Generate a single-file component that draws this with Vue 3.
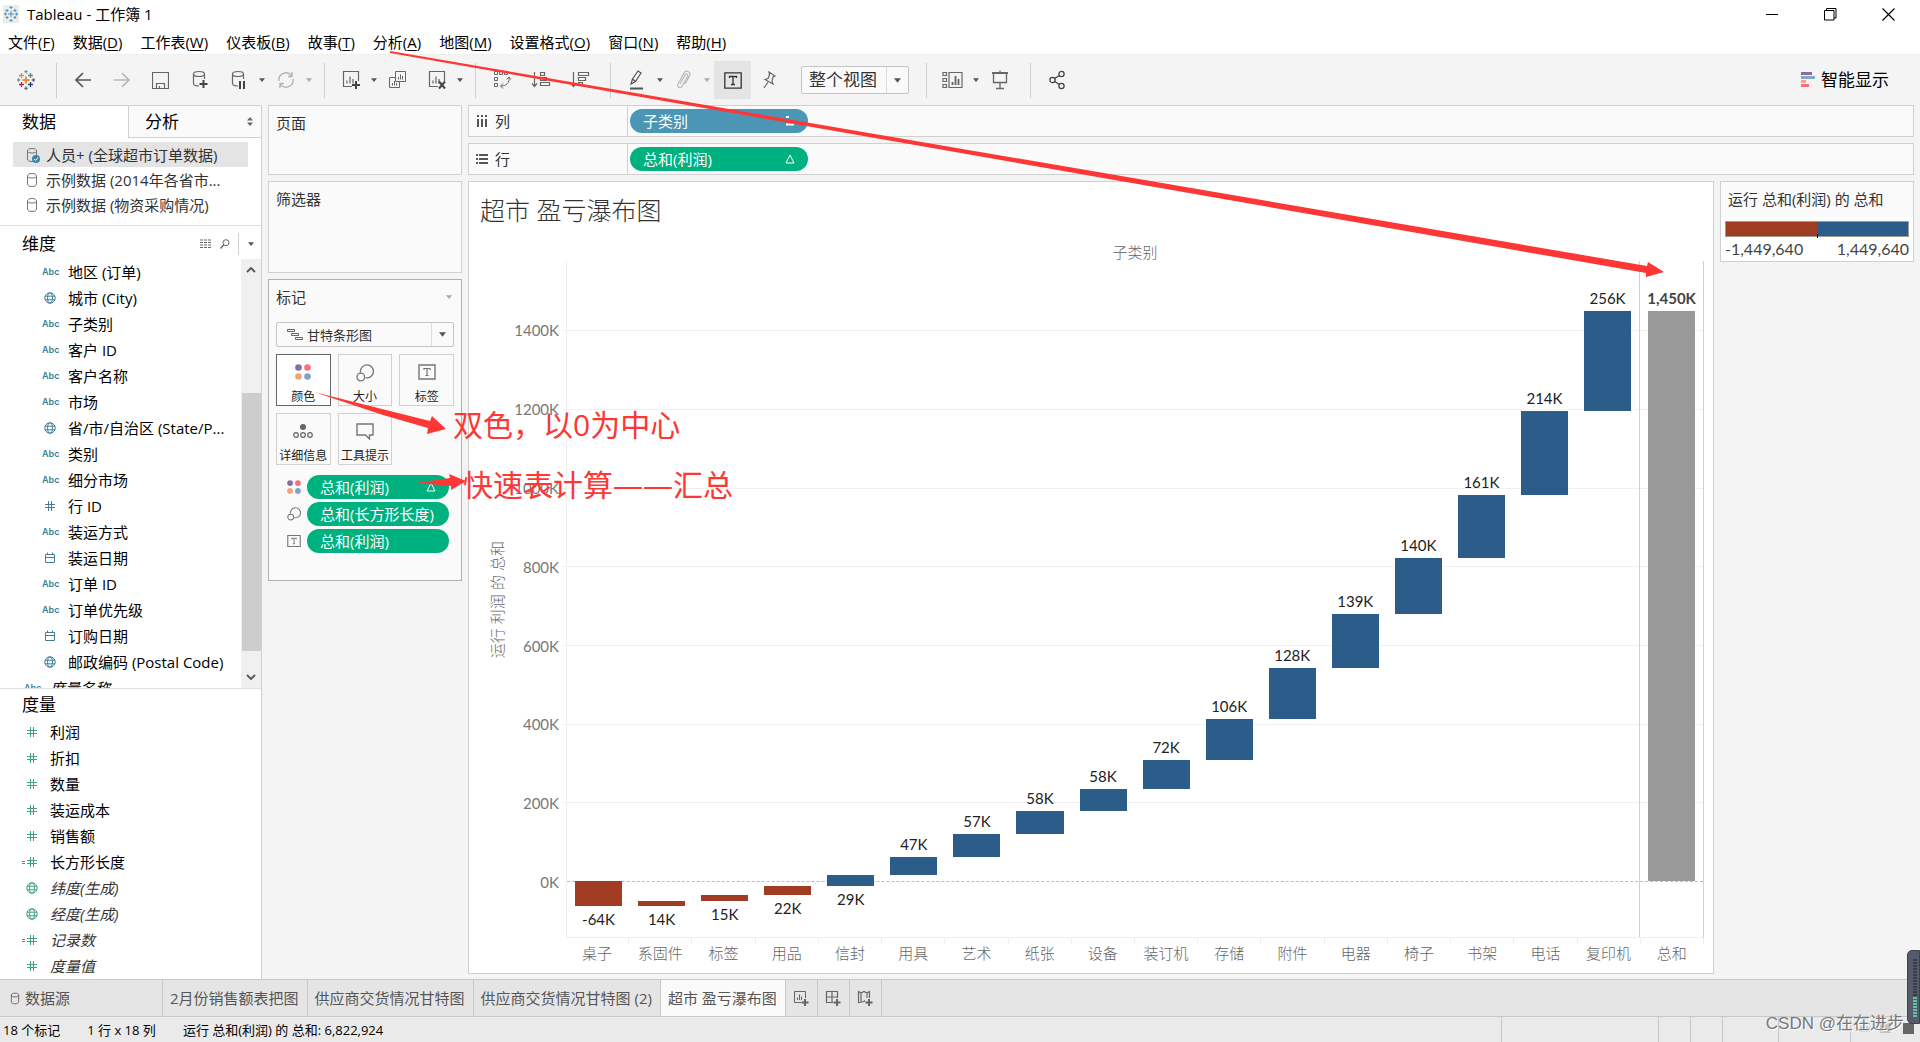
<template>
  <div class="app">
    <svg class="defs" aria-hidden="true">
      <symbol id="caret" viewBox="0 0 8 5"><path d="M0 0h8L4 5z" fill="currentColor" /></symbol>
      <symbol id="globe" viewBox="0 0 12 12">
        <g fill="none" stroke="currentColor"><circle cx="6" cy="6" r="5.2" /><ellipse cx="6" cy="6" rx="2.4" ry="5.2" /><path d="M1 4.2h10M1 7.8h10" /></g>
      </symbol>
      <symbol id="hash" viewBox="0 0 12 12"><path d="M4.5 1v10M7.5 1v10M1 4.5h10M1 7.5h10" fill="none" stroke="currentColor" /></symbol>
      <symbol id="calc" viewBox="0 0 16 12"><path d="M8.5 1v10M11.5 1v10M5 4.5h10M5 7.5h10M0 5.5h3M0 7.5h3" fill="none" stroke="currentColor" /></symbol>
      <symbol id="date" viewBox="0 0 12 12"><path d="M1.5 2.5h9v8h-9zM1.5 5.5h9M3.5 0.5v2M8.5 0.5v2" fill="none" stroke="currentColor" /></symbol>
      <symbol id="db" viewBox="0 0 12 16"><path d="M1.5 4v8c0 1.6 1.5 2.5 4.5 2.5s4.5-.9 4.5-2.5V4c0-1.600-1.500-2.500-4.500-2.500S1.500 2.400 1.500 4zM1.500 4c0 1.400 1.500 2 4.500 2s4.500-.600 4.500-2" fill="none" stroke="currentColor" /></symbol>
      <symbol id="dots" viewBox="0 0 16 16">
        <circle cx="3.500" cy="3.500" r="3.300" fill="#8a6d9c" /><circle cx="12.500" cy="3.500" r="3.300" fill="#fa6e7d" />
        <circle cx="3.500" cy="12.500" r="3.300" fill="#f2a479" /><circle cx="12.500" cy="12.500" r="3.300" fill="#7ea3cb" />
      </symbol>
      <symbol id="size" viewBox="0 0 18 18">
        <g fill="none" stroke="#757575" stroke-width="1.300"><path d="M4.500 8.500a6.500 6.500 0 1 1 5 5.300" /><circle cx="4.800" cy="13" r="3.800" /></g>
      </symbol>
      <symbol id="label" viewBox="0 0 18 16">
        <g fill="none" stroke="#757575"><path d="M1 1h16v14H1z" stroke-width="1.400" /><path d="M6 6V4.500h6V6M9 4.500v7M7.500 11.500h3" stroke-width="1.200" /></g>
      </symbol>
      <symbol id="sheet" viewBox="0 0 20 20">
        <path d="M11 16.500H2.500v-15h15V11M6 13.500v-3M9 13.500v-7M12 13.500V9" fill="none" stroke="currentColor" stroke-width="1.200" />
      </symbol>
    </svg>

    <header class="titlebar">
      <svg width="16" height="18" viewBox="0 0 16 18">
        <path d="M0 0h16v18H0z" fill="#ececec" />
        <path d="M8 6v6M5 9h6M8 1v3M6.500 2.500h3M8 14v3M6.500 15.500h3M1 9h3M2.500 7.500v3M12 9h3M13.500 7.500v3M4 4v3M2.500 5.500h3M12 4v3M10.500 5.500h3M4 11v3M2.500 12.500h3M12 11v3M10.500 12.500h3" stroke="#4f93b8" fill="none" />
      </svg>
      <span class="title">Tableau - 工作簿 1</span>
      <button class="win" aria-label="最小化"><svg width="13" height="13"><path d="M0 6.500h12" stroke="#000" /></svg></button>
      <button class="win" aria-label="还原"><svg width="13" height="13"><path d="M.5 2.500h9.500v9.500H.5zM2.500 2.500v-2h9.500v9.500h-2" fill="none" stroke="#000" /></svg></button>
      <button class="win" aria-label="关闭"><svg width="13" height="13"><path d="M.5.500l12 12M12.500.500l-12 12" stroke="#000" stroke-width="1.200" /></svg></button>
    </header>

    <nav class="menu">
      <a v-for="m in menus" :key="m[0]" href="#">{{ m[0] }}(<u>{{ m[1] }}</u>)</a>
    </nav>

    <div class="toolbar">
      <button class="tool" aria-label="开始页面">
        <svg width="18" height="20" viewBox="0 0 18 20" fill="none" stroke-width="1.300">
          <path d="M9 6.500v7M5.500 10h7" stroke="#eb8a2d" stroke-width="1.800" />
          <path d="M4.500 3v5M2 5.500h5" stroke="#eb8a2d" /><path d="M13.500 3v5M11 5.500h5" stroke="#59879b" />
          <path d="M4.500 12v5M2 14.500h5" stroke="#c72035" /><path d="M13.500 12v5M11 14.500h5" stroke="#1f457e" />
          <path d="M9 0v3.500M7.300 1.700h3.400M1.500 8.300v3.400M0 10h3.300" stroke="#7099a6" /><path d="M9 16.500V20M7.300 18.300h3.400M16.500 8.300v3.400M14.700 10H18" stroke="#5b6591" />
        </svg>
      </button>
      <i class="sep"></i>
      <button class="tool" aria-label="撤消"><svg width="18" height="16" viewBox="0 0 18 16"><path d="M17 8H2M9 1L2 8l7 7" fill="none" stroke="#555" stroke-width="1.700" /></svg></button>
      <button class="tool" aria-label="重做"><svg width="18" height="16" viewBox="0 0 18 16"><path d="M1 8h15M9 1l7 7-7 7" fill="none" stroke="#b8b8b8" stroke-width="1.700" /></svg></button>
      <button class="tool" aria-label="保存"><svg width="17" height="17"><path d="M.5.500h16v16H.5zM4.500 16.500v-5h8v5M7.500 16v-2" fill="none" stroke="#666" stroke-width="1.200" /></svg></button>
      <button class="tool" aria-label="新建数据源">
        <svg width="18" height="20" viewBox="0 0 18 20" fill="none" stroke="#666"><path d="M8 16c-3.500 0-5.500-.8-5.500-2.500V4M13.500 4v5M2.500 4c0 1.600 2 2.500 5.500 2.500s5.500-.9 5.500-2.500S11.500 1.500 8 1.500 2.500 2.400 2.500 4z" stroke-width="1.200" /><path d="M12.500 10v8M8.500 14h8" stroke="#444" stroke-width="2" /></svg>
      </button>
      <button class="tool" aria-label="暂停自动更新">
        <svg width="18" height="20" viewBox="0 0 18 20" fill="none" stroke="#666"><path d="M8 16c-3.500 0-5.500-.8-5.500-2.500V4M13.500 4v5M2.500 4c0 1.600 2 2.500 5.500 2.500s5.500-.9 5.500-2.500S11.500 1.500 8 1.500 2.500 2.400 2.500 4z" stroke-width="1.200" /><path d="M10 11v8M14 11v8" stroke="#444" stroke-width="2" /></svg>
      </button>
      <svg class="drop"><use href="#caret" /></svg>
      <button class="tool" aria-label="运行更新"><svg width="20" height="18" viewBox="0 0 20 18" fill="none" stroke="#b5b5b5" stroke-width="1.400"><path d="M3 10a7 7 0 0 1 12.500-5.300M17 8a7 7 0 0 1-12.500 5.300M16 1v4.500h-4M4 17v-4.500h4" /></svg></button>
      <svg class="drop off"><use href="#caret" /></svg>
      <i class="sep"></i>
      <button class="tool" aria-label="新建工作表"><svg width="20" height="20"><use href="#sheet" /><path d="M15 11v8M11 15h8" stroke="#444" stroke-width="2" /></svg></button>
      <svg class="drop"><use href="#caret" /></svg>
      <button class="tool" aria-label="复制"><svg width="20" height="20" viewBox="0 0 20 20" fill="none" stroke="#666"><path d="M7.500 1.500h10v10h-10zM7 7.500H1.500v10h10V12M10.500 9.500V7M12.500 9.500v-5M14.500 9.500V6M4.500 15.500V13M6.500 15.500V11M8.500 15.500V13" /></svg></button>
      <button class="tool" aria-label="清除工作表"><svg width="20" height="20"><use href="#sheet" /><path d="M12 11.500l6 7M18 11.500l-6 7" stroke="#444" stroke-width="2" /></svg></button>
      <svg class="drop"><use href="#caret" /></svg>
      <i class="sep"></i>
      <button class="tool" aria-label="交换行和列"><svg width="20" height="20" viewBox="0 0 20 20" fill="none" stroke="#666"><path d="M2.500 1.500h3v3h-3zM7.500 1.500h3v3h-3zM12.500 1.500h3v3h-3zM2.500 7.500h3v3h-3zM2.500 13.500h3v3h-3zM17 7c1 6-3 9-8 9M14.500 9.500L17 7l2 2.500M11 13.500L8.500 16l2.500 2.500" /></svg></button>
      <button class="tool" aria-label="升序排序"><svg width="20" height="20" viewBox="0 0 20 20" fill="none" stroke="#666"><path d="M3.500 2v14M1 13.500l2.500 3 2.500-3M9.500 2.500h4v3h-4zM9.500 7.500h6v3h-6zM9.500 12.500h9v3h-9z" stroke-width="1.200" /></svg></button>
      <button class="tool" aria-label="降序排序"><svg width="20" height="20" viewBox="0 0 20 20" fill="none" stroke="#666"><path d="M3.500 2v14M1 13.500l2.500 3 2.500-3M8.500 2.500h10v3h-10zM8.500 7.500h7v3h-7zM8.500 12.500h4v3h-4z" stroke-width="1.200" /></svg></button>
      <i class="sep"></i>
      <button class="tool" aria-label="突出显示"><svg width="18" height="22" viewBox="0 0 18 22" fill="none" stroke="#555"><path d="M3 15l1.500-5L10 2l3 2-5.500 8.500zM4.500 10l3 2.500" stroke-width="1.200" /><path d="M2 19.500h13" stroke-width="2" /></svg></button>
      <svg class="drop"><use href="#caret" /></svg>
      <button class="tool" aria-label="分组成员"><svg width="16" height="20" viewBox="0 0 16 20" fill="none" stroke="#b8b8b8" stroke-width="1.200"><path d="M4 14l5-9c1-1.800 3.500-.5 2.500 1.500l-5.500 10c-1.500 2.500-5.500.500-4-2.500L8 3c2-3.500 7.500-1 5.500 3L9 14" /></svg></button>
      <svg class="drop off"><use href="#caret" /></svg>
      <button class="tool on" aria-label="显示标记标签"><svg width="18" height="17" viewBox="0 0 18 17" fill="none" stroke="#333"><path d="M.8.800h16.400v15.400H.8z" stroke-width="1.300" /><path d="M5.500 6V4.500h7V6M9 4.500v8M7 12.500h4" stroke-width="1.300" /></svg></button>
      <button class="tool pin" aria-label="固定轴"><svg width="14" height="18" viewBox="0 0 14 18" fill="none" stroke="#666" stroke-width="1.200"><path d="M7 1l6 4-2 1-1 4 1 3-8-4.500 3-1L7.500 4zM6 11l-4 6" /></svg></button>
      <div class="combo fit">
        <select aria-label="适合"><option>整个视图</option></select>
        <span><svg><use href="#caret" /></svg></span>
      </div>
      <i class="sep wide"></i>
      <button class="tool" aria-label="显示/隐藏卡"><svg width="21" height="18" viewBox="0 0 21 18" fill="none" stroke="#666" stroke-width="1.200"><path d="M1 1.500h3.500v3H1zM1 7.500h3.500v3H1zM1 13.500h3.500v3H1zM7 1.500h13v15H7z" /><path d="M10.500 14v-3M13.500 14V5M16.500 14V8" stroke-width="1.800" /></svg></button>
      <svg class="drop"><use href="#caret" /></svg>
      <button class="tool" aria-label="演示模式"><svg width="18" height="20" viewBox="0 0 18 20" fill="none" stroke="#666"><path d="M1 3h16" stroke-width="2" /><path d="M2.500 3v9.500h13V3M9 .500V3M9 12.500v6M5 18.500h8" stroke-width="1.300" /></svg></button>
      <i class="sep"></i>
      <button class="tool" aria-label="共享"><svg width="16" height="20" viewBox="0 0 16 20" fill="none" stroke="#444" stroke-width="1.300"><circle cx="3.500" cy="10" r="2.600" /><circle cx="12.500" cy="4" r="2.600" /><circle cx="12.500" cy="16" r="2.600" /><path d="M5.700 8.500l4.600-3M5.700 11.500l4.600 3" /></svg></button>
      <button class="show-me">
        <svg width="14" height="16"><path d="M0 0h11v3H0z" fill="#876f98" /><path d="M0 4h14v3H0z" fill="#83a6cd" /><path d="M0 8h5v3H0z" fill="#f3a680" /><path d="M0 12h8v3H0z" fill="#fa6e7d" /></svg>
        智能显示
      </button>
    </div>

    <main class="workspace">
      <aside class="data">
        <div class="data-tabs">
          <button class="active">数据</button>
          <button>分析
            <svg width="6" height="9"><path d="M0 3.500L3 0l3 3.500zM0 5.500h6L3 9z" fill="#666" /></svg>
          </button>
        </div>
        <ul class="sources">
          <li v-for="(s, i) in sources" :key="s" :class="{ picked: i === 0 }">
            <svg width="14" height="16"><use href="#db" width="12" height="16" /><g v-if="i === 0"><circle cx="10" cy="12" r="4" fill="#3f83a8" /><path d="M8 12l1.500 1.500 2.500-3" fill="none" stroke="#fff" /></g></svg>
            {{ s }}
          </li>
        </ul>
        <div class="fields-head">
          <h2>维度</h2>
          <svg width="12" height="10"><path d="M0 1h12M0 3.500h12M0 6h12M0 8.500h12" stroke="#666" stroke-dasharray="3 1" /></svg>
          <svg width="10" height="10" viewBox="0 0 10 10"><g fill="none" stroke="#666"><circle cx="6" cy="3.700" r="3" /><path d="M3.800 5.800L.5 9.500" stroke-width="1.400" /></g></svg>
          <i></i>
          <svg class="drop"><use href="#caret" /></svg>
        </div>
        <div class="dims">
          <ul>
            <li v-for="d in dimensions" :key="d[1]" :class="{ names: d[0] === 'names' }">
              <span v-if="d[0] === 'abc' || d[0] === 'names'" class="abc">Abc</span>
              <svg v-else class="ficon"><use :href="'#' + d[0]" /></svg>
              <span class="fname">{{ d[1] }}</span>
            </li>
          </ul>
          <div class="scroll">
            <svg width="10" height="7"><path d="M1 6l4-4 4 4" fill="none" stroke="#555" stroke-width="1.800" /></svg>
            <i></i>
            <svg width="10" height="7"><path d="M1 1l4 4 4-4" fill="none" stroke="#555" stroke-width="1.800" /></svg>
          </div>
        </div>
        <div class="measures">
          <h2>度量</h2>
          <ul>
            <li v-for="m in measures" :key="m[1]">
              <svg class="ficon" :class="{ calc: m[0] === 'calc' }"><use :href="'#' + m[0]" /></svg>
              <em v-if="m[2]">{{ m[1] }}</em>
              <span v-else>{{ m[1] }}</span>
            </li>
          </ul>
        </div>
      </aside>

      <section class="cards">
        <div class="card pages">页面</div>
        <div class="card filters">筛选器</div>
        <div class="card marks">
          <div class="marks-head">标记<svg class="drop off"><use href="#caret" /></svg></div>
          <div class="combo type">
            <svg class="gantt" width="16" height="12"><path d="M.5.500h7v2h-7zM4.500 4.500h7v2h-7zM8.500 8.500h7v2h-7z" fill="none" stroke="#666" /></svg>
            <select aria-label="标记类型"><option>甘特条形图</option></select>
            <span><svg><use href="#caret" /></svg></span>
          </div>
          <div class="mark-grid">
            <button class="sel"><svg width="16" height="16"><use href="#dots" /></svg>颜色</button>
            <button><svg width="18" height="18"><use href="#size" /></svg>大小</button>
            <button><svg width="18" height="16"><use href="#label" /></svg>标签</button>
            <button><svg width="20" height="16" viewBox="0 0 20 16"><circle cx="10" cy="4" r="3" fill="#666" /><g fill="none" stroke="#666" stroke-width="1.200"><circle cx="3" cy="12" r="2.300" /><circle cx="10" cy="12" r="2.300" /><circle cx="17" cy="12" r="2.300" /></g></svg>详细信息</button>
            <button><svg width="18" height="17"><path d="M1 1h16v11h-3.500v4L9.500 12H1z" fill="none" stroke="#757575" stroke-width="1.400" /></svg>工具提示</button>
          </div>
          <div v-for="p in pills" :key="p.icon" class="mark-pill">
            <svg width="14" height="14"><use :href="'#' + p.icon" /></svg>
            <span class="pill green">{{ p.text }}<svg v-if="p.delta" width="10" height="10"><path d="M5 1l4 8H1z" fill="none" stroke="#fff" /></svg></span>
          </div>
        </div>
      </section>

      <section class="right">
        <div class="shelf">
          <div class="shelf-name"><svg width="12" height="12"><path d="M1 0h2v2H1zM5 0h2v2H5zM9 0h2v2H9zM1 4h2v8H1zM5 4h2v8H5zM9 4h2v8H9z" fill="#555" /></svg>列</div>
          <span class="pill blue">子类别<svg width="10" height="10"><path d="M1 1h3M1 8.500h8" stroke="#fff" stroke-width="2" /></svg></span>
        </div>
        <div class="shelf">
          <div class="shelf-name"><svg width="12" height="12"><path d="M0 1h2v2H0zM0 5h2v2H0zM0 9h2v2H0zM3 1h9v2H3zM3 5h9v2H3zM3 9h9v2H3z" fill="#555" /></svg>行</div>
          <span class="pill green">总和(利润)<svg width="10" height="10"><path d="M5 1l4 8H1z" fill="none" stroke="#fff" /></svg></span>
        </div>
        <div class="canvas">
          <div class="view">
            <h1>超市 盈亏瀑布图</h1>
            <div class="chart">
              <div class="col-head">子类别</div>
              <div class="y-title"><span>运行 利润 的 总和</span></div>
              <div class="y-axis">
                <span v-for="t in ticks" :key="t" :style="{ top: pos(t) + '%' }">{{ t }}K</span>
              </div>
              <div class="plot">
                <i v-for="t in ticks" :key="t" class="grid" :class="{ zero: t === 0 }" :style="{ top: pos(t) + '%' }"></i>
                <div v-for="b in bars" :key="b.name" class="col" :class="{ total: b.total }">
                  <div :style="{ height: pos(b.to) + '%' }"></div>
                  <div class="bar" :class="{ neg: b.loss, total: b.total }" :style="{ height: pos(b.from) - pos(b.to) + '%' }">
                    <span :class="{ below: b.from < 0 }">{{ b.label }}</span>
                  </div>
                </div>
              </div>
              <div class="x-axis"><span v-for="b in bars" :key="b.name">{{ b.name }}</span></div>
            </div>
          </div>
          <div class="legend">
            <h3>运行 总和(利润) 的 总和</h3>
            <div class="ramp"></div>
            <div class="range"><span>-1,449,640</span><span>1,449,640</span></div>
          </div>
        </div>
      </section>
    </main>

    <nav class="sheets">
      <a href="#" class="source"><svg width="10" height="13"><use href="#db" /></svg>数据源</a>
      <a v-for="s in sheets" :key="s" href="#" :class="{ current: s === '超市 盈亏瀑布图' }">{{ s }}</a>
      <button aria-label="新建工作表"><svg width="16" height="16" fill="none" stroke="#666"><path d="M8 12.500H1.500v-11h11V8M4.500 10V7.500M6.500 10V4.500M8.500 10V6.500" /><path d="M12 9v7M8.500 12.500h7" stroke-width="2" /></svg></button>
      <button aria-label="新建仪表板"><svg width="16" height="16" fill="none" stroke="#666"><path d="M8 12.500H1.500v-11h11V8M1.500 7h11M7 1.500v11" stroke-width="1.200" /><path d="M12 9v7M8.500 12.500h7" stroke-width="2" /></svg></button>
      <button aria-label="新建故事"><svg width="16" height="16" fill="none" stroke="#666"><path d="M8 10.500l-1 1-5.500 1v-11L4 3l3-1.500L10 3l2.500-1.500V8M4 3v9M10 3v5" stroke-width="1.200" /><path d="M12 9v7M8.500 12.500h7" stroke-width="2" /></svg></button>
    </nav>

    <footer class="status">
      <span>18 个标记</span><span>1 行 x 18 列</span><span>运行 总和(利润) 的 总和: 6,822,924</span>
      <div class="cells"><i></i><i></i><i></i><i></i><i></i><i></i></div>
    </footer>

    <svg class="arrows">
      <path d="M390 51l1257 215 1-4 16 10-18 5v-4L390 53z" />
      <path d="M314 392l116 29 2-5 14 13-19 5 1-6-45-13z" />
      <path d="M416 483l34-5-1-4 17 7-15 9v-4z" />
    </svg>
    <p class="note first">双色，以0为中心</p>
    <p class="note second">快速表计算——汇总</p>
    <svg class="view-switch" width="38" height="11"><path d="M0 1h10M0 4.500h10M0 8h10" stroke="#bbb" stroke-width="2" stroke-dasharray="2 1" /><path d="M20 0h11v10H20z" fill="#c4c4c4" /></svg>
    <i class="corner"></i>
    <div class="gauge"><i v-for="n in 20" :key="n" :class="{ lit: n > 13 }"></i></div>
    <div class="watermark">CSDN @在在进步</div>
  </div>
</template>

<script setup>
const menus = [
  ['文件', 'F'], ['数据', 'D'], ['工作表', 'W'], ['仪表板', 'B'], ['故事', 'T'],
  ['分析', 'A'], ['地图', 'M'], ['设置格式', 'O'], ['窗口', 'N'], ['帮助', 'H']
]

const sources = ['人员+ (全球超市订单数据)', '示例数据 (2014年各省市...', '示例数据 (物资采购情况)']

const dimensions = [
  ['abc', '地区 (订单)'],
  ['globe', '城市 (City)'],
  ['abc', '子类别'],
  ['abc', '客户 ID'],
  ['abc', '客户名称'],
  ['abc', '市场'],
  ['globe', '省/市/自治区 (State/P...'],
  ['abc', '类别'],
  ['abc', '细分市场'],
  ['hash', '行 ID'],
  ['abc', '装运方式'],
  ['date', '装运日期'],
  ['abc', '订单 ID'],
  ['abc', '订单优先级'],
  ['date', '订购日期'],
  ['globe', '邮政编码 (Postal Code)'],
  ['names', '度量名称']
]

// [icon, name, generated]
const measures = [
  ['hash', '利润'],
  ['hash', '折扣'],
  ['hash', '数量'],
  ['hash', '装运成本'],
  ['hash', '销售额'],
  ['calc', '长方形长度'],
  ['globe', '纬度(生成)', true],
  ['globe', '经度(生成)', true],
  ['calc', '记录数', true],
  ['hash', '度量值', true]
]

const pills = [
  { icon: 'dots', text: '总和(利润)', delta: true },
  { icon: 'size', text: '总和(长方形长度)' },
  { icon: 'label', text: '总和(利润)' }
]

const sheets = ['2月份销售额表把图', '供应商交货情况甘特图', '供应商交货情况甘特图 (2)', '超市 盈亏瀑布图']

const ticks = [1400, 1200, 1000, 800, 600, 400, 200, 0]

const max = 1576
const min = -142
const pos = (v) => ((max - v) / (max - min)) * 100

const bars = [
  { name: '桌子', from: -64, to: 0, label: '-64K', loss: true },
  { name: '系固件', from: -64, to: -50, label: '14K', loss: true },
  { name: '标签', from: -50, to: -35, label: '15K', loss: true },
  { name: '用品', from: -35, to: -12, label: '22K', loss: true },
  { name: '信封', from: -12, to: 16, label: '29K' },
  { name: '用具', from: 16, to: 62, label: '47K' },
  { name: '艺术', from: 62, to: 120, label: '57K' },
  { name: '纸张', from: 120, to: 177, label: '58K' },
  { name: '设备', from: 177, to: 235, label: '58K' },
  { name: '装订机', from: 235, to: 308, label: '72K' },
  { name: '存储', from: 308, to: 413, label: '106K' },
  { name: '附件', from: 413, to: 542, label: '128K' },
  { name: '电器', from: 542, to: 680, label: '139K' },
  { name: '椅子', from: 680, to: 820, label: '140K' },
  { name: '书架', from: 820, to: 981, label: '161K' },
  { name: '电话', from: 981, to: 1195, label: '214K' },
  { name: '复印机', from: 1195, to: 1450, label: '256K' },
  { name: '总和', from: 0, to: 1450, label: '1,450K', total: true }
]
</script>

<style>
body {
  margin: 0;
}
</style>

<style scoped>
* {
  box-sizing: border-box;
}

.app {
  position: relative;
  display: flex;
  flex-direction: column;
  height: 100vh;
  overflow: hidden;
  background: #f4f4f4;
  color: #000;
  font: 15px/18px "Open Sans", "Noto Sans CJK SC", sans-serif;
  white-space: nowrap;
}

button {
  display: flex;
  align-items: center;
  justify-content: center;
  padding: 0;
  border: 0;
  background: none;
  color: inherit;
  font: inherit;
}

a {
  color: inherit;
  text-decoration: none;
}

ul,
h1,
h2,
h3,
p {
  margin: 0;
  padding: 0;
  list-style: none;
  font-weight: 400;
}

svg {
  flex: none;
}

.defs {
  position: absolute;
  width: 0;
  height: 0;
}

.titlebar {
  display: flex;
  align-items: center;
  height: 28px;
  padding: 0 3px;
  background: #fff;
}

.title {
  flex: 1;
  padding-left: 8px;
}

.win {
  width: 58px;
  height: 28px;
}

.menu {
  display: flex;
  align-items: center;
  gap: 18px;
  height: 26px;
  padding: 2px 8px 0;
  background: #fff;
}

.menu u {
  text-underline-offset: 2px;
}

.toolbar {
  display: flex;
  align-items: center;
  height: 51px;
  padding: 0 31px 0 6px;
  border-top: 1px solid #efefef;
}

.tool {
  width: 39px;
  height: 38px;
  color: #666;
}

.tool.on {
  width: 37px;
  margin-left: 3px;
  background: #e4e4e4;
}

.tool.pin {
  width: 36px;
}

.drop {
  width: 6px;
  height: 4px;
  margin: 0 1px;
  color: #555;
}

.off {
  color: #aaa;
}

.sep {
  width: 1px;
  height: 35px;
  margin: 0 6px 0 11px;
  background: #d0d0d0;
}

.sep.wide {
  margin-left: 17px;
}

.combo {
  display: flex;
  align-items: center;
  border: 1px solid #c6c6c6;
  border-radius: 2px;
  background: #fafafa;
}

.combo select {
  flex: 1;
  min-width: 0;
  height: 100%;
  padding: 0;
  border: 0;
  background: none;
  color: #333;
  font: inherit;
  appearance: none;
}

.combo span {
  display: flex;
  align-items: center;
  justify-content: center;
  width: 22px;
  height: 100%;
  border-left: 1px solid #dedede;
  color: #555;
}

.combo span svg {
  width: 7px;
  height: 5px;
}

.fit {
  width: 108px;
  height: 28px;
  margin-left: 14px;
  padding-left: 7px;
  font-size: 17px;
}

.show-me {
  gap: 6px;
  margin-left: auto;
  font-size: 17px;
}

.workspace {
  display: flex;
  flex: 1;
  gap: 6px;
  min-height: 0;
  padding-right: 6px;
}

.data {
  display: flex;
  flex-direction: column;
  width: 262px;
  border: solid #d0d0d0;
  border-width: 1px 1px 0 0;
  background: #fff;
}

.data-tabs {
  display: flex;
  font-size: 17px;
}

.data-tabs button {
  flex: 1;
  justify-content: space-between;
  height: 32px;
  padding: 0 8px 0 16px;
  border: solid #d0d0d0;
  border-width: 0 0 1px 1px;
  background: #fafafa;
}

.data-tabs .active {
  flex: none;
  width: 128px;
  padding-left: 22px;
  border: 0;
  background: #fff;
}

.sources {
  padding: 4px 13px 8px;
  border-bottom: 1px solid #e0e0e0;
  color: #333;
}

.sources li {
  display: flex;
  align-items: center;
  gap: 6px;
  height: 25px;
  padding-left: 13px;
}

.sources svg {
  color: #777;
}

.sources .picked {
  background: #e4e4e4;
}

.fields-head {
  display: flex;
  align-items: center;
  gap: 8px;
  height: 33px;
  padding: 2px 6px 0 22px;
}

.fields-head i {
  width: 1px;
  height: 22px;
  background: #d0d0d0;
}

h2 {
  flex: 1;
  font-size: 17px;
}

.dims {
  display: flex;
  flex: 1;
  min-height: 0;
  border-bottom: 1px solid #e0e0e0;
}

.dims ul {
  flex: 1;
  overflow: hidden;
  padding-left: 42px;
}

li .fname {
  padding-left: 10px;
}

.dims li {
  display: flex;
  align-items: center;
  height: 26px;
}

.dims .names {
  margin-left: -18px;
  font-style: italic;
}

.dims .names .abc {
  font-style: normal;
}

.abc {
  width: 16px;
  color: #3f7f9c;
  font: 600 9px/12px Inter, sans-serif;
}

.ficon {
  width: 12px;
  height: 12px;
  margin: 0 2px;
  color: #3f7f9c;
}

.scroll {
  display: flex;
  flex-direction: column;
  align-items: center;
  width: 20px;
  padding: 7px 0;
  background: #f0f0f0;
}

.scroll i {
  flex: 1;
  width: 19px;
  margin: 120px 0 23px;
  background: #cdcdcd;
}

.measures {
  padding: 2px 0 0 22px;
}

.measures h2 {
  line-height: 28px;
}

.measures li {
  display: flex;
  align-items: center;
  height: 26px;
}

.measures .ficon {
  margin: 0 12px 0 4px;
  color: #3fa37c;
}

.measures .calc {
  width: 16px;
  margin-left: 0;
}

.measures em {
  color: #333;
}

.cards {
  display: flex;
  flex-direction: column;
  gap: 6px;
  width: 194px;
  color: #333;
}

.card {
  padding: 8px 7px;
  border: 1px solid #d0d0d0;
  background: #fafafa;
}

.pages {
  height: 70px;
}

.filters {
  height: 92px;
}

.marks {
  height: 302px;
  border-color: #b0b0b0;
}

.marks-head {
  display: flex;
  align-items: center;
  justify-content: space-between;
  padding-right: 1px;
}

.type {
  height: 25px;
  margin: 16px 0 7px;
  padding-left: 10px;
  font-size: 13px;
}

.type select {
  padding-left: 4px;
}

.mark-grid {
  display: grid;
  grid-template-columns: repeat(3, 1fr);
  gap: 7px;
  margin-bottom: 10px;
}

.mark-grid button {
  flex-direction: column;
  justify-content: space-between;
  height: 52px;
  padding-top: 9px;
  border: 1px solid #d0d0d0;
  color: #222;
  font-size: 12px;
  line-height: 16px;
}

.mark-grid .sel {
  border-color: #666;
  background: #fff;
}

.mark-pill {
  display: flex;
  align-items: center;
  gap: 6px;
  margin-bottom: 3px;
  padding: 0 5px 0 11px;
}

.pill {
  display: flex;
  align-items: center;
  justify-content: space-between;
  height: 24px;
  padding: 0 13px;
  border-radius: 12px;
  color: #fff;
}

.mark-pill .pill {
  flex: 1;
}

.green {
  background: #00b180;
}

.blue {
  background: #4a96b4;
}

.right {
  display: flex;
  flex: 1;
  flex-direction: column;
  gap: 6px;
  min-width: 0;
  padding-bottom: 5px;
}

.shelf {
  display: flex;
  align-items: center;
  height: 32px;
  border: 1px solid #d0d0d0;
  background: #fafafa;
  color: #333;
}

.shelf-name {
  display: flex;
  align-items: center;
  gap: 7px;
  width: 159px;
  height: 100%;
  margin-right: 2px;
  padding-left: 7px;
  border-right: 1px solid #d0d0d0;
}

.shelf .pill {
  width: 178px;
}

.canvas {
  display: flex;
  flex: 1;
  gap: 6px;
  align-items: flex-start;
  min-height: 0;
}

.view {
  display: flex;
  flex: 1;
  flex-direction: column;
  height: 100%;
  padding: 12px 9px 0 11px;
  border: 1px solid #d0d0d0;
  background: #fff;
}

h1 {
  margin-bottom: 17px;
  color: #333;
  font-size: 25px;
  font-weight: 300;
  line-height: 32px;
}

.chart {
  display: grid;
  flex: 1;
  grid-template-columns: 34px 52px 1fr;
  grid-template-rows: 18px 1fr 35px;
  color: #666;
  font-family: Lato, "Noto Sans CJK SC", sans-serif;
  font-weight: 300;
}

.col-head {
  grid-column: 3;
  text-align: center;
}

.y-title {
  display: flex;
  align-items: center;
  justify-content: center;
}

.y-title span {
  writing-mode: vertical-rl;
  text-orientation: sideways;
  transform: rotate(180deg);
}

.y-axis {
  position: relative;
  font-weight: 400;
  color: #787878;
}

.y-axis span {
  position: absolute;
  right: 7px;
  margin-top: -9px;
}

.plot {
  position: relative;
  display: flex;
  border: solid #f0f0f0;
  border-width: 0 0 1px 1px;
  border-right: 1px solid #d0d0d0;
}

.grid {
  position: absolute;
  right: 0;
  left: -5px;
  border-top: 1px solid #f0f0f0;
}

.zero {
  left: 0;
  border-top: 1px dashed #bdbdbd;
}

.col {
  position: relative;
  flex: 1;
  padding: 0 8px;
}

.col.total {
  border-left: 1px solid #d0d0d0;
}

.bar {
  position: relative;
  background: #2c5c8a;
}

.bar.neg {
  background: #9f3c22;
}

.bar.total {
  background: #999;
}

.bar span {
  position: absolute;
  bottom: 100%;
  left: 50%;
  margin-bottom: 4px;
  transform: translateX(-50%);
  color: #222;
  font-weight: 400;
}

.bar.total span {
  color: #444;
  font-weight: 700;
}

.bar .below {
  top: 100%;
  bottom: auto;
  margin-top: 4px;
}

.x-axis {
  display: flex;
  grid-column: 3;
}

.x-axis span {
  flex: 1;
  height: 5px;
  padding-top: 6px;
  border-right: 1px solid #eee;
  text-align: center;
}

.legend {
  width: 194px;
  border: 1px solid #d0d0d0;
  background: #fff;
  color: #333;
}

.legend h3 {
  margin-bottom: 4px;
  padding: 8px 7px 9px;
  background: #fafafa;
  font-size: 15px;
}

.ramp {
  position: relative;
  height: 16px;
  margin: 0 4px;
  border: 1px solid #a39c8c;
  background: linear-gradient(90deg, #9f3c22 50%, #2c5c8a 50%);
}

.ramp::after {
  content: "";
  position: absolute;
  bottom: -2px;
  left: 50%;
  width: 1px;
  height: 4px;
  background: #000;
}

.range {
  display: flex;
  justify-content: space-between;
  padding: 3px 4px;
  color: #444;
  font-family: Lato, sans-serif;
  font-size: 16px;
}

.sheets {
  display: flex;
  height: 38px;
  border: solid #c8c8c8;
  border-width: 1px 0;
  background: #e5e5e5;
  color: #555;
}

.sheets a,
.sheets button {
  display: flex;
  align-items: center;
  padding: 0 8px 0 7px;
  border-right: 1px solid #c8c8c8;
}

.sheets .source {
  gap: 5px;
  width: 163px;
  padding-left: 10px;
}

.sheets .current {
  background: #fafafa;
}

.sheets button {
  width: 32px;
}

.status {
  display: flex;
  gap: 27px;
  height: 25px;
  padding: 4px 0 0 3px;
  background: #eaeaea;
  font-size: 13px;
}

.cells {
  display: flex;
  width: 419px;
  margin: -4px 0 0 auto;
}

.cells i {
  width: 32px;
  border-left: 1px solid #c8c8c8;
}

.cells i:first-child {
  width: 157px;
}

.cells i:nth-child(4) {
  width: 56px;
}

.cells i:nth-child(5) {
  width: 72px;
}

.arrows {
  position: absolute;
  top: 0;
  left: 0;
  width: 100%;
  height: 100%;
  fill: #fc3735;
  pointer-events: none;
}

.note {
  position: absolute;
  color: #fc3735;
  font-size: 30px;
  line-height: 40px;
}

.first {
  top: 405px;
  left: 453px;
}

.second {
  top: 465px;
  left: 463px;
}

.view-switch {
  position: absolute;
  right: 22px;
  bottom: 8px;
}

.corner {
  position: absolute;
  right: 6px;
  bottom: 8px;
  width: 11px;
  height: 11px;
  background: #666;
}

.gauge {
  position: absolute;
  right: 0;
  bottom: 18px;
  display: flex;
  flex-direction: column;
  gap: 1px;
  width: 13px;
  height: 74px;
  padding: 8px 2px 6px 5px;
  border: 1px solid #3c4150;
  border-radius: 5px 0 0 5px;
  background: #555b6b;
}

.gauge i {
  flex: 1;
  background: #383d49;
}

.gauge .lit {
  background: #5cc79c;
}

.watermark {
  position: absolute;
  right: 16px;
  bottom: 6px;
  color: #777;
  font: 17px/24px "Liberation Sans", "Noto Sans CJK SC", sans-serif;
  text-shadow: 1px 1px 0 #fff;
}
</style>
